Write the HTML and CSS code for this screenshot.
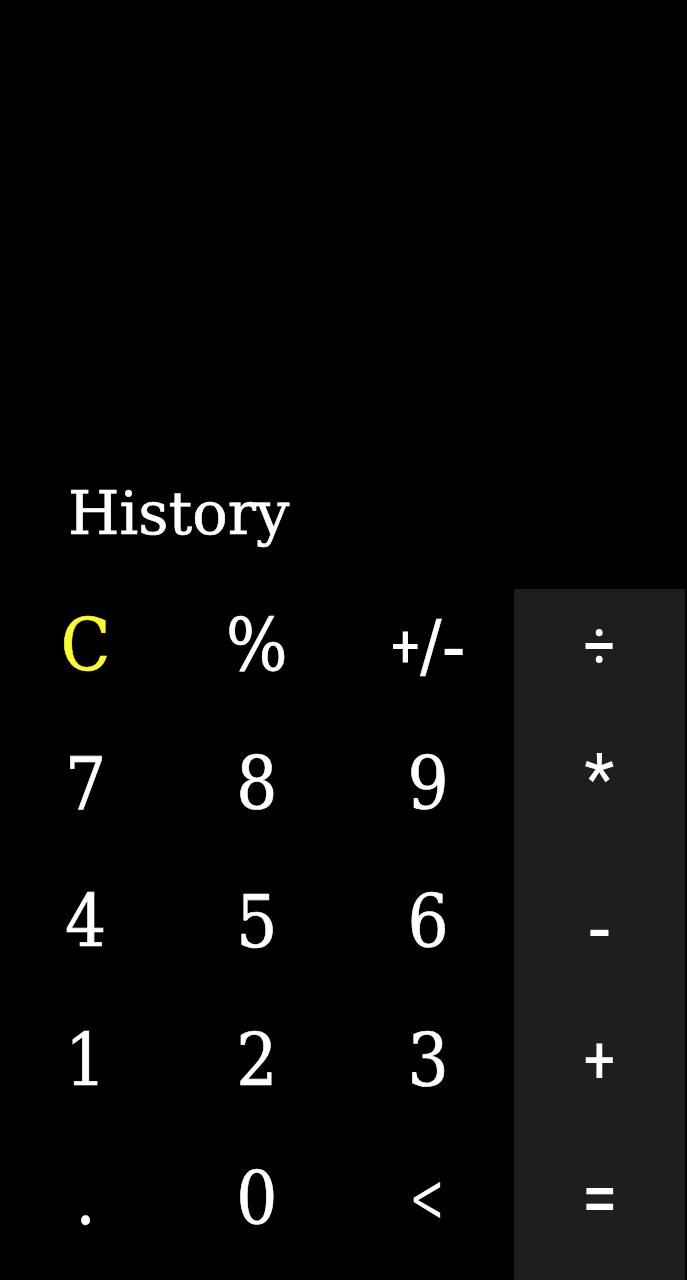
FILE: index.html
```html
<!DOCTYPE html>
<html>
<head>
<meta charset="utf-8">
<link rel="stylesheet" href="styles.css">
</head>
<body>
<div class="app">
  <div class="display"></div>
  <div class="history">History</div>
  <div class="keys">
    <div class="key clear">C</div>
    <div class="key">%</div>
    <div class="key sign"><span class="plus">+</span>/<span class="minus">-</span></div>
    <div class="key op">÷</div>
    <div class="key">7</div>
    <div class="key">8</div>
    <div class="key">9</div>
    <div class="key op star">*</div>
    <div class="key">4</div>
    <div class="key">5</div>
    <div class="key">6</div>
    <div class="key op sub">-</div>
    <div class="key">1</div>
    <div class="key">2</div>
    <div class="key">3</div>
    <div class="key op add">+</div>
    <div class="key dot">.</div>
    <div class="key">0</div>
    <div class="key back"><span class="lt">&lt;</span></div>
    <div class="key op eq">=</div>
  </div>
</div>
</body>
</html>
```
FILE: styles.css
```css
html, body {
  margin: 0;
  padding: 0;
  background: #000;
}
.app {
  width: 687px;
  height: 1280px;
  display: flex;
  flex-direction: column;
  background: #000;
  color: #fff;
  font-family: "DejaVu Serif", serif;
}
.display {
  flex: 1;
}
.history {
  font-size: 59px;
  padding-left: 68px;
  line-height: 1;
  padding-bottom: 46px;
  -webkit-text-stroke: 0.6px #fff;
}
.keys {
  width: 685px;
  height: 691px;
  display: grid;
  grid-template-columns: repeat(4, 1fr);
  grid-template-rows: repeat(5, 1fr);
}
.key {
  display: flex;
  align-items: center;
  justify-content: center;
  box-sizing: border-box;
  padding-bottom: 24px;
  font-size: 72px;
  font-stretch: condensed;
  -webkit-text-stroke: 0.6px currentColor;
}
.clear {
  color: #ffff2e;
}
.sign {
  font-size: 70px;
}
.sign .plus {
  font-family: Roboto, "Noto Sans", sans-serif;
  font-size: 60px;
  -webkit-text-stroke: 0;
}
.sign .minus {
  font-size: 80px;
  -webkit-text-stroke: 0;
}
.back .lt {
  display: inline-block;
  font-family: Roboto, "Noto Sans", sans-serif;
  font-size: 78px;
  font-weight: 300;
  transform: scaleY(1.12);
  -webkit-text-stroke: 0;
}
.op {
  background: #1e1e1e;
  font-family: Roboto, "Noto Sans", sans-serif;
  font-size: 66px;
  -webkit-text-stroke: 0;
}
.op.star {
  font-size: 70px;
  padding-bottom: 34px;
}
.op.sub {
  font-family: "DejaVu Serif", serif;
  font-size: 80px;
  padding-bottom: 14px;
}
.op.eq {
  font-size: 78px;
}
```
